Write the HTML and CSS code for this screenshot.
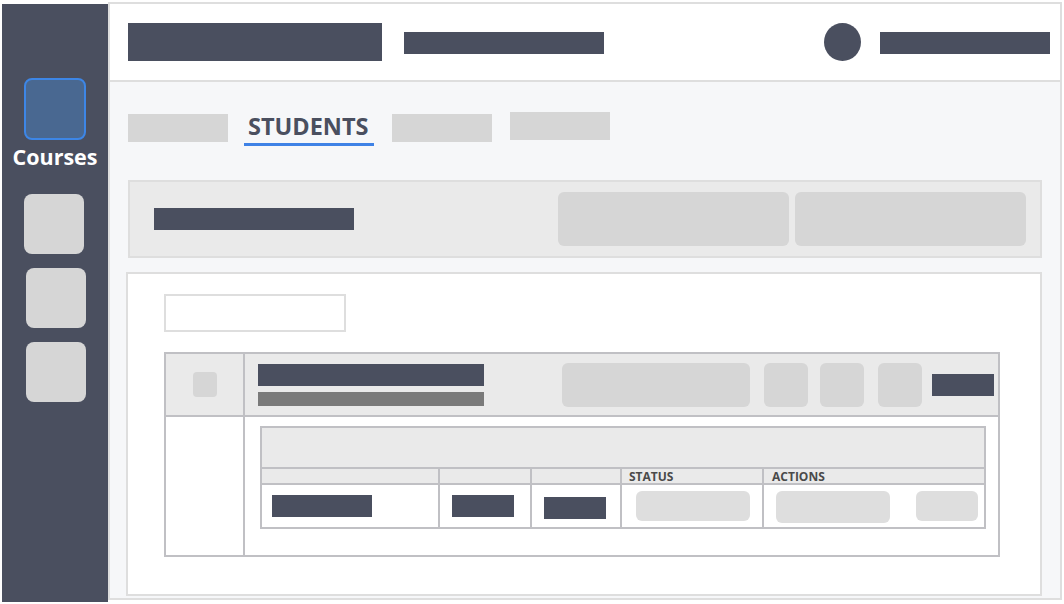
FILE: index.html
```html
<!DOCTYPE html>
<html lang="en">
<head>
  <meta charset="UTF-8">
  <meta name="viewport" content="width=device-width, initial-scale=1.0">
  <title>Students</title>
  <link rel="stylesheet" href="styles.css">
</head>
<body>
  <div class="app">
    <nav class="sidebar">
      <div class="nav-item active">
        <div class="nav-icon"></div>
        <span class="nav-label">Courses</span>
      </div>
      <div class="nav-icon gray first"></div>
      <div class="nav-icon gray"></div>
      <div class="nav-icon gray"></div>
    </nav>

    <div class="main">
      <header class="topbar">
        <div class="bar logo"></div>
        <div class="bar crumb"></div>
        <div class="avatar"></div>
        <div class="bar user"></div>
      </header>

      <div class="content">
        <div class="tabs">
          <div class="tab ghost"></div>
          <div class="tab current">STUDENTS</div>
          <div class="tab ghost"></div>
          <div class="tab ghost raised"></div>
        </div>

        <div class="toolbar">
          <div class="bar toolbar-title"></div>
          <div class="toolbar-actions">
            <div class="btn wide"></div>
            <div class="btn wide"></div>
          </div>
        </div>

        <div class="panel">
          <div class="search"></div>

          <div class="group">
            <div class="cell head check-cell"><div class="checkbox"></div></div>
            <div class="cell head group-head">
              <div class="title-stack">
                <div class="bar group-title"></div>
                <div class="sub-bar"></div>
              </div>
              <div class="btn group-btn"></div>
              <div class="btn square"></div>
              <div class="btn square s2"></div>
              <div class="btn square s3"></div>
              <div class="bar group-tag"></div>
            </div>
            <div class="cell"></div>
            <div class="cell group-body">
              <div class="students">
                <div class="band"></div>
                <div class="th"></div>
                <div class="th"></div>
                <div class="th"></div>
                <div class="th">STATUS</div>
                <div class="th actions-th">ACTIONS</div>
                <div class="td"><div class="bar name"></div></div>
                <div class="td pad12"><div class="bar short"></div></div>
                <div class="td pad12"><div class="bar short low"></div></div>
                <div class="td pad14"><div class="pill status"></div></div>
                <div class="td actions">
                  <div class="pill act-main"></div>
                  <div class="pill act-small"></div>
                </div>
              </div>
            </div>
          </div>
        </div>
      </div>
    </div>
  </div>
</body>
</html>
```

FILE: styles.css
```css
* {
  box-sizing: border-box;
}

body {
  margin: 0;
  background: #fff;
  font-family: 'Open Sans', 'Liberation Sans', sans-serif;
}

.app {
  display: flex;
  width: 1062px;
  height: 602px;
  padding: 2px 0 0 2px;
}

/* sidebar */
.sidebar {
  width: 106px;
  height: 598px;
  margin-top: 2px;
  background: #4a4f5f;
  display: flex;
  flex-direction: column;
  padding-left: 22px;
}

.nav-item {
  margin-top: 74px;
  display: flex;
  flex-direction: column;
  align-items: flex-start;
}

.nav-icon {
  width: 62px;
  height: 62px;
  border-radius: 8px;
  background: #496891;
  border: 2px solid #3d86e6;
}

.nav-label {
  margin: 3px 0 0 -12px;
  color: #fff;
  font-weight: 700;
  font-size: 21.5px;
  line-height: 28px;
  width: 86px;
  text-align: center;
}

.nav-icon.gray {
  width: 60px;
  height: 60px;
  border: none;
  background: #d6d6d6;
  margin: 14px 0 0 2px;
}

.nav-icon.gray.first {
  margin: 23px 0 0 0;
}

/* main */
.main {
  flex: 1;
  display: flex;
  flex-direction: column;
  height: 598px;
  border: 2px solid #dedede;
  background: #f6f7f9;
}

.bar {
  background: #4a4f5f;
}

.topbar {
  height: 78px;
  flex-shrink: 0;
  background: #fff;
  border-bottom: 2px solid #dedede;
  display: flex;
  align-items: center;
  padding: 0 10px 0 18px;
}

.logo {
  width: 254px;
  height: 38px;
}

.crumb {
  width: 200px;
  height: 22px;
  margin: 2px 0 0 22px;
}

.avatar {
  width: 37px;
  height: 38px;
  border-radius: 50%;
  background: #4a4f5f;
  margin-left: auto;
}

.user {
  width: 170px;
  height: 22px;
  margin: 2px 0 0 19px;
}

.content {
  flex: 1;
  display: flex;
  flex-direction: column;
  padding: 0 18px 2px;
}

.tabs {
  display: flex;
  align-items: flex-start;
  padding-top: 30px;
}

.tab.ghost {
  width: 100px;
  height: 28px;
  margin-top: 2px;
  background: #d6d6d6;
  margin-left: 18px;
}

.tab.ghost:first-child {
  margin-left: 0;
}

.tab.ghost.raised {
  margin-top: 0;
}

.tab.current {
  margin-left: 16px;
  width: 130px;
  height: 34px;
  padding-left: 4px;
  border-bottom: 3px solid #3f82e6;
  color: #4a4f5f;
  font-weight: 700;
  font-size: 23.5px;
  line-height: 29px;
}

/* toolbar */
.toolbar {
  margin-top: 34px;
  height: 78px;
  border: 2px solid #dedede;
  background: #eaeaea;
  display: flex;
  align-items: center;
  padding: 0 14px 0 24px;
}

.toolbar-title {
  width: 200px;
  height: 22px;
}

.toolbar-actions {
  margin-left: auto;
  display: flex;
  gap: 6px;
}

.btn {
  background: #d6d6d6;
  border-radius: 6px;
}

.btn.wide {
  width: 231px;
  height: 54px;
}

/* content panel */
.panel {
  flex: 1;
  margin: 14px 0 0 -2px;
  border: 2px solid #dedede;
  background: #fff;
  padding: 20px 0 0 36px;
}

.search {
  width: 182px;
  height: 38px;
  border: 2px solid #dedede;
}

.group {
  margin-top: 20px;
  width: 836px;
  display: grid;
  grid-template-columns: 77px 1fr;
  grid-template-rows: 61px 138px;
  gap: 2px;
  padding: 2px;
  background: #c0c0c4;
}

.cell {
  background: #fff;
}

.cell.head {
  background: #eaeaea;
  display: flex;
  align-items: center;
}

.check-cell {
  justify-content: center;
}

.checkbox {
  width: 24px;
  height: 25px;
  border-radius: 4px;
  background: #d6d6d6;
}

.group-head {
  padding-left: 13px;
}

.title-stack {
  display: flex;
  flex-direction: column;
  gap: 6px;
}

.group-title {
  width: 226px;
  height: 22px;
}

.sub-bar {
  width: 226px;
  height: 14px;
  background: #7a7a7a;
}

.group-btn {
  width: 188px;
  height: 44px;
  margin-left: 78px;
}

.btn.square {
  width: 44px;
  height: 44px;
  margin-left: 14px;
}

.btn.square.s2 {
  margin-left: 12px;
}

.btn.square.s3 {
  margin-left: 14px;
}

.group-tag {
  width: 62px;
  height: 22px;
  margin-left: 10px;
}

.group-body {
  padding: 9px 0 0 15px;
}

.students {
  width: 726px;
  display: grid;
  grid-template-columns: 176px 90px 88px 140px 1fr;
  grid-template-rows: 39px 14px 42px;
  gap: 2px;
  padding: 2px;
  background: #c0c0c4;
}

.band {
  grid-column: 1 / -1;
  background: #eaeaea;
}

.th {
  background: #eaeaea;
  font-size: 12px;
  font-weight: 700;
  line-height: 12px;
  padding-top: 2px;
  color: #4a4a4a;
  padding-left: 7px;
  white-space: nowrap;
}

.th.actions-th {
  padding-left: 8px;
}

.td {
  background: #fff;
  display: flex;
  align-items: center;
  padding-left: 10px;
}

.td.pad12 {
  padding-left: 12px;
}

.td.pad14 {
  padding-left: 14px;
}

.name {
  width: 100px;
  height: 22px;
}

.short {
  width: 62px;
  height: 22px;
}

.short.low {
  margin-top: 4px;
}

.pill {
  background: #dedede;
  border-radius: 6px;
}

.status {
  width: 114px;
  height: 30px;
}

.actions {
  padding-left: 12px;
}

.act-main {
  width: 114px;
  height: 32px;
  margin-top: 2px;
}

.act-small {
  width: 62px;
  height: 30px;
  margin-left: 26px;
}
```
